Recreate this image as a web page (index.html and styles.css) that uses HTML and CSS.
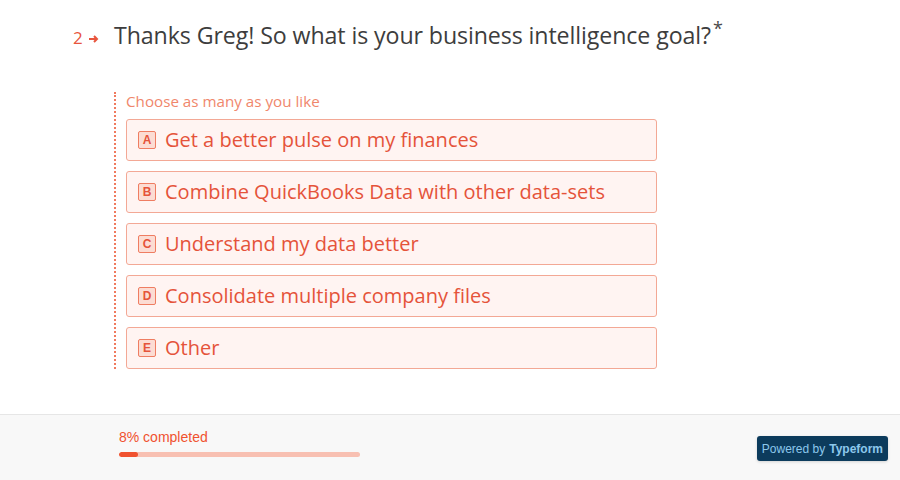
FILE: index.html
```html
<!DOCTYPE html>
<html lang="en">
<head>
<meta charset="utf-8">
<title>Typeform</title>
<link rel="stylesheet" href="styles.css">
</head>
<body>
<main class="form">
  <header class="question">
    <div class="q-index">
      <span class="q-num">2</span>
      <svg class="q-arrow" width="10" height="8" viewBox="0 0 10 8"><path d="M0 4h7.5M5 1l3 3-3 3" fill="none" stroke="currentColor" stroke-width="2"/></svg>
    </div>
    <h1 class="q-title">Thanks Greg! So what is your business intelligence goal?<span class="req">*</span></h1>
  </header>
  <section class="answers">
    <p class="hint">Choose as many as you like</p>
    <ul class="choices">
      <li class="choice"><span class="key">A</span><span class="label">Get a better pulse on my finances</span></li>
      <li class="choice"><span class="key">B</span><span class="label">Combine QuickBooks Data with other data-sets</span></li>
      <li class="choice"><span class="key">C</span><span class="label">Understand my data better</span></li>
      <li class="choice"><span class="key">D</span><span class="label">Consolidate multiple company files</span></li>
      <li class="choice"><span class="key">E</span><span class="label">Other</span></li>
    </ul>
  </section>
</main>
<footer class="footer">
  <div class="progress">
    <div class="progress-text">8% completed</div>
    <div class="progress-track"><div class="progress-fill" style="width:8%"></div></div>
  </div>
  <a class="badge">Powered by <b>Typeform</b></a>
</footer>
</body>
</html>
```
FILE: styles.css
```css
* { box-sizing: border-box; }
html, body { margin: 0; padding: 0; }
body {
  width: 900px;
  height: 480px;
  overflow: hidden;
  background: #fff;
  font-family: "Open Sans", "Noto Sans", sans-serif;
  display: flex;
  flex-direction: column;
}
.form {
  height: 414px;
  padding-top: 19px;
}
.question {
  display: flex;
  align-items: baseline;
  padding-left: 73px;
}
.q-index {
  width: 41px;
  color: #e8553d;
  font-size: 17px;
}
.q-num { line-height: 32px; }
.q-arrow { display: inline-block; margin-left: 2px; vertical-align: 1px; }
.q-title {
  margin: 0;
  font-weight: 400;
  font-size: 23.2px;
  line-height: 32px;
  color: #3d3d3d;
  letter-spacing: -0.1px;
}
.req {
  font-size: 18px;
  line-height: 0;
  color: #4a4a4a;
  vertical-align: 9px;
  margin-left: 2px;
}
.answers {
  margin: 38px 0 0 114px;
  border-left: 2px dotted #f07a5e;
  padding: 0 0 0 10px;
  width: 545px;
}
.hint {
  margin: 0 0 9px;
  font-size: 15.2px;
  line-height: 18px;
  color: #f0876c;
}
.choices {
  list-style: none;
  margin: 0;
  padding: 0;
  display: flex;
  flex-direction: column;
  gap: 10px;
}
.choice {
  width: 531px;
  height: 42px;
  border: 1px solid #f3a895;
  border-radius: 3px;
  background: #fff4f2;
  display: flex;
  align-items: center;
  padding-left: 11px;
  gap: 9px;
}
.key {
  width: 18px;
  height: 18px;
  border: 1px solid #ef7d62;
  border-radius: 2px;
  background: #fcdcd3;
  color: #e5533a;
  font-family: "Liberation Sans", Arial, sans-serif;
  font-weight: 700;
  font-size: 12px;
  display: flex;
  align-items: center;
  justify-content: center;
}
.label {
  font-size: 20px;
  color: #e5533a;
  line-height: 26px;
}
.footer {
  height: 66px;
  border-top: 1px solid #e6e6e6;
  background: #f8f8f8;
  display: flex;
  justify-content: space-between;
  align-items: flex-start;
  padding: 0 12px 0 119px;
}
.progress { padding-top: 14px; }
.progress-text {
  font-family: "Liberation Sans", Arial, sans-serif;
  font-size: 14px;
  color: #f0522f;
  line-height: 16px;
}
.progress-track {
  margin-top: 7px;
  width: 241px;
  height: 5px;
  border-radius: 3px;
  background: #f8c0b2;
  overflow: hidden;
}
.progress-fill {
  height: 100%;
  background: #f0522f;
  border-radius: 3px;
}
.badge {
  margin-top: 21px;
  height: 25px;
  padding: 0 5px;
  border-radius: 3px;
  background: #0c3b5c;
  color: #8cc8ec;
  font-family: "Liberation Sans", Arial, sans-serif;
  font-size: 12px;
  display: flex;
  align-items: center;
  gap: 4px;
  box-shadow: 0 1px 3px rgba(0,0,0,0.15);
}
.badge b { font-weight: 700; }
```
